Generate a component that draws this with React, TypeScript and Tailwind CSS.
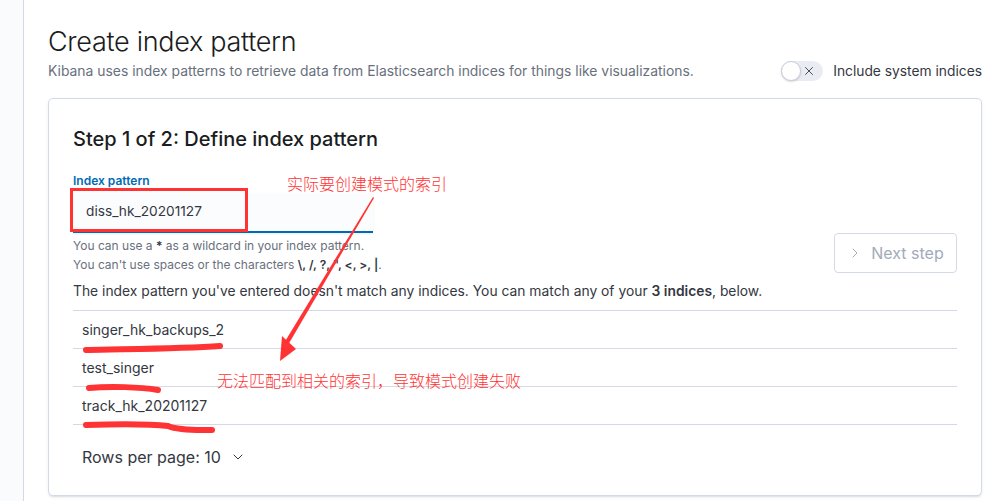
import { ChevronDown, ChevronRight, X } from "lucide-react";

const indices = ["singer_hk_backups_2", "test_singer", "track_hk_20201127"];

function Toggle() {
  return (
    <div className="relative h-[20px] w-[42px] rounded-full bg-[#e9edf3]">
      <div className="absolute left-0 top-0 h-[20px] w-[20px] rounded-full border border-[#c9ced6] bg-white shadow-[0_1px_2px_rgba(0,0,0,0.15)]" />
      <X className="absolute right-[7px] top-[3px] h-[14px] w-[14px] text-[#343741]" strokeWidth={1.5} />
    </div>
  );
}

function Annotations() {
  return (
    <div className="pointer-events-none absolute inset-0">
      <svg className="absolute inset-0" width="997" height="501" viewBox="0 0 997 501">
        <rect x="71.5" y="189.5" width="175" height="41" fill="none" stroke="#ff3333" strokeWidth="3" />
        <polygon points="373,197 374,198 288,345 284,343" fill="#ff3333" />
        <polygon points="280,361 282,336 296,349" fill="#ff3333" />
        <path d="M86 350 C120 349 180 349 220 346" stroke="#ff3333" strokeWidth="6" strokeLinecap="round" fill="none" />
        <path d="M89 388 C110 386 140 387 158 390" stroke="#ff3333" strokeWidth="6" strokeLinecap="round" fill="none" />
        <path d="M86 425 C120 424 150 424 168 426 C180 431 200 430 212 430" stroke="#ff3333" strokeWidth="6" strokeLinecap="round" fill="none" />
      </svg>
      <div className="absolute left-[287px] top-[173px] text-[16px] leading-[20px] text-[#ff3333] [font-family:'Noto_Sans_CJK_SC',sans-serif] font-light">
        实际要创建模式的索引
      </div>
      <div className="absolute left-[217px] top-[370px] text-[16px] leading-[20px] text-[#ff3333] [font-family:'Noto_Sans_CJK_SC',sans-serif] font-light">
        无法匹配到相关的索引，导致模式创建失败
      </div>
    </div>
  );
}

export default function App() {
  return (
    <div className="relative flex h-[501px] w-[997px] overflow-hidden bg-white text-[#343741] [font-family:Inter,'Noto_Sans_CJK_SC',sans-serif]">
      <div className="w-[24px] shrink-0 border-r border-[#d3dae6] bg-[#fafbfd]" />
      <main className="flex-1 pl-[24px] pr-[15px] pt-[24px]">
        <h1 className="text-[27px] font-light leading-[36px] tracking-[-0.3px] text-[#1a1c21]">Create index pattern</h1>
        <div className="mt-[1px] flex items-center justify-between">
          <p className="text-[13.9px] leading-[20px] text-[#69707d]">
            Kibana uses index patterns to retrieve data from Elasticsearch indices for things like visualizations.
          </p>
          <div className="flex items-center gap-[10px]">
            <Toggle />
            <span className="text-[13.8px] text-[#343741]">Include system indices</span>
          </div>
        </div>

        <section className="mt-[16px] h-[398px] rounded-[5px] border border-[#d3dae6] bg-white px-[24px] pt-[26px] shadow-[0_2px_2px_-1px_rgba(152,162,179,0.3),0_1px_5px_-2px_rgba(152,162,179,0.3)]">
          <h2 className="text-[20px] font-medium leading-[28px] text-[#1a1c21]">Step 1 of 2: Define index pattern</h2>

          <div className="mt-[20px] flex items-end justify-between">
            <div>
              <label className="block text-[12px] font-semibold leading-[16px] text-[#006bb4]">Index pattern</label>
              <div className="mt-[4px] flex h-[40px] w-[300px] items-center border-b-2 border-[#006bb4] bg-[#fbfcfd] pl-[13px] text-[13.7px] text-[#343741] shadow-[0_1px_2px_rgba(0,0,0,0.08)]">
                diss_hk_20201127
              </div>
              <div className="mt-[3px] text-[12px] leading-[19px] text-[#69707d]">
                <p>You can use a <b className="font-semibold text-[#343741]">*</b> as a wildcard in your index pattern.</p>
                <p>
                  You can't use spaces or the characters{" "}
                  <b className="font-semibold text-[#343741]">\, /, ?, ", &lt;, &gt;, |</b>.
                </p>
              </div>
            </div>
            <button className="mb-[1px] flex h-[40px] w-[123px] items-center justify-center gap-[8px] rounded-[4px] border border-[#d3dae6] text-[16px] text-[#a2abba]">
              <ChevronRight className="h-[16px] w-[16px]" strokeWidth={1.5} />
              Next step
            </button>
          </div>

          <p className="mt-[7px] text-[13.85px] leading-[20px] text-[#343741]">
            The index pattern you've entered doesn't match any indices. You can match any of your{" "}
            <b className="font-semibold">3 indices</b>, below.
          </p>

          <div className="mt-[9px] border-t border-[#d3dae6]">
            {indices.map((name) => (
              <div key={name} className="flex h-[38px] items-center border-b border-[#d3dae6] px-[9px] text-[14px] text-[#343741]">
                {name}
              </div>
            ))}
          </div>

          <div className="mt-[20px] flex items-center gap-[9px] px-[9px] text-[16px] text-[#343741]">
            Rows per page: 10
            <ChevronDown className="h-[16px] w-[16px]" strokeWidth={1.5} />
          </div>
        </section>
      </main>
      <Annotations />
    </div>
  );
}
